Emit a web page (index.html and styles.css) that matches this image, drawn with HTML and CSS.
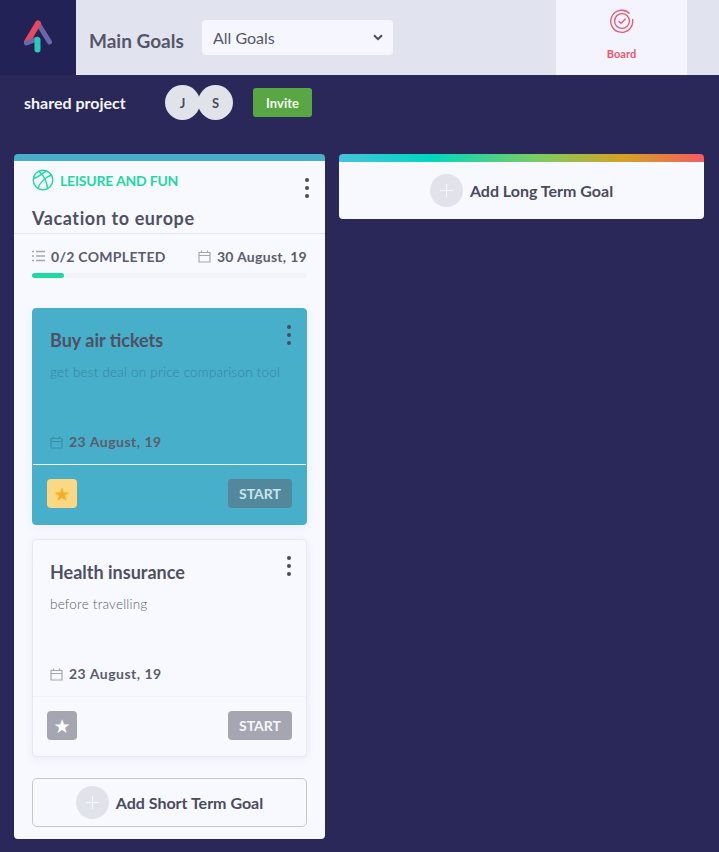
FILE: index.html
```html
<!DOCTYPE html>
<html lang="en">
<head>
  <meta charset="UTF-8">
  <title>Main Goals</title>
  <link rel="stylesheet" href="styles.css">
</head>
<body>
  <div class="topbar">
    <div class="logo">
      <svg width="32" height="36" viewBox="0 0 32 36">
        <path d="M16 5.5 L27.5 24" stroke="#6a68a8" stroke-width="5" stroke-linecap="round" fill="none"/>
        <path d="M5 24 L16 5.5" stroke="#e8475f" stroke-width="6" stroke-linecap="round" fill="none"/>
        <path d="M4.5 25 L15 21" stroke="#6a68a8" stroke-width="5" stroke-linecap="round" fill="none"/>
        <path d="M15.5 22 V31.5" stroke="#2cc9bb" stroke-width="6" stroke-linecap="round" fill="none"/>
      </svg>
    </div>
    <div class="page-title">Main Goals</div>
    <div class="goal-select">
      <span>All Goals</span>
      <svg width="10" height="7" viewBox="0 0 10 7"><path d="M1 1.2 L5 5.2 L9 1.2" stroke="#4a4b5e" stroke-width="2" fill="none"/></svg>
    </div>
    <div class="board-tab">
      <svg width="24" height="24" viewBox="0 0 24 24" fill="none" stroke="#e9566d" stroke-width="1.3">
        <path d="M19.5 4.5 A11 11 0 1 0 22.5 10"/>
        <circle cx="12" cy="12" r="7.4"/>
        <path d="M8.6 12 L11 14.4 L15.6 9.8"/>
      </svg>
      <span>Board</span>
    </div>
  </div>

  <div class="subbar">
    <div class="project-name">shared project</div>
    <div class="members">
      <div class="avatar">J</div>
      <div class="avatar">S</div>
    </div>
    <button class="invite">Invite</button>
  </div>

  <div class="board">
    <div class="column">
      <div class="column-head">
        <div class="category">
          <svg width="22" height="22" viewBox="0 0 22 22" fill="none" stroke="#1ed9a0" stroke-width="1.4">
            <circle cx="11" cy="11" r="9.8"/>
            <path d="M7 2.2 C11 6 15 11 15.6 19.6"/>
            <path d="M14.5 1.9 C9 6 4.5 9 1.3 9.5"/>
            <path d="M19.6 6 C14 8 8 13 6 19.6"/>
          </svg>
          <span>LEISURE AND FUN</span>
        </div>
        <div class="dots"><i></i><i></i><i></i></div>
        <h2>Vacation to europe</h2>
      </div>
      <div class="column-meta">
        <div class="meta-item">
          <svg width="13" height="12" viewBox="0 0 13 12" stroke="#a5a6b4" stroke-width="1.5"><path d="M0 1.5 H2 M4 1.5 H13 M0 6 H2 M4 6 H13 M0 10.5 H2 M4 10.5 H13"/></svg>
          <span>0/2 COMPLETED</span>
        </div>
        <div class="meta-item">
          <svg class="cal" width="13" height="13" viewBox="0 0 13 13" fill="none" stroke="#a5a6b4" stroke-width="1.2"><path d="M1 2.5 H12 V12 H1 Z M1 5.5 H12 M3.5 0.5 V2.5 M9.5 0.5 V2.5"/></svg>
          <span>30 August, 19</span>
        </div>
      </div>
      <div class="progress"><div class="progress-fill" style="width: 32px"></div></div>

      <div class="task task-active">
        <div class="task-body">
          <div class="dots"><i></i><i></i><i></i></div>
          <h3>Buy air tickets</h3>
          <p>get best deal on price comparison tool</p>
          <div class="task-date">
            <svg width="13" height="13" viewBox="0 0 13 13" fill="none" stroke="#3f8ea8" stroke-width="1.2"><path d="M1 2.5 H12 V12 H1 Z M1 5.5 H12 M3.5 0.5 V2.5 M9.5 0.5 V2.5"/></svg>
            <span>23 August, 19</span>
          </div>
        </div>
        <div class="task-foot">
          <div class="star star-on">★</div>
          <button class="start">START</button>
        </div>
      </div>

      <div class="task">
        <div class="task-body">
          <div class="dots"><i></i><i></i><i></i></div>
          <h3>Health insurance</h3>
          <p>before travelling</p>
          <div class="task-date">
            <svg width="13" height="13" viewBox="0 0 13 13" fill="none" stroke="#a5a6b4" stroke-width="1.2"><path d="M1 2.5 H12 V12 H1 Z M1 5.5 H12 M3.5 0.5 V2.5 M9.5 0.5 V2.5"/></svg>
            <span>23 August, 19</span>
          </div>
        </div>
        <div class="task-foot">
          <div class="star">★</div>
          <button class="start">START</button>
        </div>
      </div>

      <div class="add-short">
        <div class="plus"></div>
        <span>Add Short Term Goal</span>
      </div>
    </div>

    <div class="add-long">
      <div class="plus"></div>
      <span>Add Long Term Goal</span>
    </div>
  </div>
</body>
</html>
```

FILE: styles.css
```css
* {
  box-sizing: border-box;
}
html, body {
  height: 100%;
}
body {
  margin: 0;
  background: #2a2858;
  font-family: Lato, "Open Sans", sans-serif;
  color: #4a4b5e;
  overflow: hidden;
}
.topbar {
  display: flex;
  align-items: stretch;
  height: 75px;
  background: #e1e3ee;
}
.logo {
  width: 76px;
  background: #232257;
  display: flex;
  align-items: center;
  justify-content: center;
  padding-bottom: 4px;
}
.page-title {
  margin-left: 13px;
  padding-top: 29px;
  font-size: 19px;
  font-weight: 700;
  line-height: 24px;
  color: #55566a;
  width: 113px;
}
.goal-select {
  align-self: flex-start;
  margin-top: 20px;
  width: 191px;
  height: 35px;
  padding: 0 10px 0 11px;
  display: flex;
  align-items: center;
  justify-content: space-between;
  background: #f5f6fe;
  border-radius: 4px;
  font-size: 16px;
  color: #55566a;
}
.board-tab {
  margin-left: auto;
  margin-right: 32px;
  width: 131px;
  background: #f3f4fd;
  display: flex;
  flex-direction: column;
  align-items: center;
  padding-top: 9px;
  font-size: 11px;
  font-weight: 700;
  color: #e9566d;
}
.board-tab span {
  margin-top: 14px;
}
.subbar {
  display: flex;
  align-items: center;
  height: 55px;
  padding-left: 24px;
}
.project-name {
  width: 141px;
  font-size: 16px;
  font-weight: 700;
  color: #f3f4fd;
}
.members {
  display: flex;
  width: 88px;
}
.avatar {
  width: 35px;
  height: 35px;
  border-radius: 50%;
  background: #e1e3ea;
  display: flex;
  align-items: center;
  justify-content: center;
  font-size: 13px;
  font-weight: 700;
  color: #4a4b5e;
}
.avatar + .avatar {
  margin-left: -2px;
}
.invite {
  width: 59px;
  height: 29px;
  border: none;
  border-radius: 3px;
  background: #59a744;
  color: #f3f7ee;
  font-family: inherit;
  font-size: 13px;
  font-weight: 700;
  padding: 0;
}
.board {
  display: flex;
  align-items: flex-start;
  gap: 14px;
  padding: 24px 15px 0 14px;
}
.column {
  width: 311px;
  height: 685px;
  flex-shrink: 0;
  background: #f8f9ff;
  border-top: 7px solid #47afc9;
  border-radius: 4px;
}
.column-head {
  position: relative;
  height: 73px;
  padding: 8px 17px 0 18px;
  border-bottom: 1px solid #e4e5ee;
}
.category {
  display: flex;
  align-items: center;
  gap: 6px;
  height: 22px;
  font-size: 14px;
  font-weight: 700;
  letter-spacing: -0.2px;
  color: #1ed9a0;
}
.column-head h2 {
  margin: 16px 0 0;
  font-size: 18px;
  line-height: 22px;
  font-weight: 700;
  letter-spacing: 0.6px;
  color: #4f5063;
}
.dots {
  position: absolute;
  top: 17px;
  right: 16px;
  display: flex;
  flex-direction: column;
  gap: 4px;
}
.dots i {
  display: block;
  width: 4px;
  height: 4px;
  border-radius: 50%;
  background: #4a4b5e;
}
.column-meta {
  display: flex;
  justify-content: space-between;
  align-items: center;
  height: 16px;
  margin: 14px 18px 0 18px;
  font-size: 14px;
  font-weight: 700;
  letter-spacing: 0.3px;
  color: #5b5c6e;
}
.meta-item {
  display: flex;
  align-items: center;
  gap: 6px;
}
.progress {
  height: 5px;
  margin: 9px 18px 0;
  background: #f2f3f7;
  border-radius: 3px;
}
.progress-fill {
  height: 100%;
  background: #1ed9a0;
  border-radius: 3px;
}
.task {
  position: relative;
  height: 218px;
  margin: 30px 18px 0;
  background: #f8f9ff;
  border: 1px solid #e6e7f0;
  border-radius: 4px;
  box-shadow: 0 2px 8px rgba(80, 80, 120, 0.08);
}
.task + .task {
  margin-top: 14px;
}
.task-active {
  background: #47afc9;
  border-color: #47afc9;
  height: 217px;
}
.task-body {
  position: relative;
  height: 156px;
  padding: 21px 17px 14px;
  display: flex;
  flex-direction: column;
}
.task-active .task-body {
  height: 155px;
  padding-top: 20px;
}
.task-body .dots {
  top: 16px;
  right: 15px;
}
.task-body h3 {
  margin: 0;
  font-size: 18px;
  line-height: 22px;
  font-weight: 700;
  color: #4f5063;
}
.task-body p {
  margin: 13px 0 0;
  font-size: 13.5px;
  line-height: 16px;
  font-weight: 300;
  letter-spacing: 0.2px;
  color: #5b5c6e;
}
.task-active .task-body p {
  color: #3a82a0;
}
.task-date {
  margin-top: auto;
  display: flex;
  align-items: center;
  gap: 6px;
  font-size: 14px;
  line-height: 16px;
  font-weight: 700;
  letter-spacing: 0.5px;
  color: #5b5c6e;
}
.task-foot {
  display: flex;
  justify-content: space-between;
  align-items: flex-start;
  padding: 14px 14px 0;
  border-top: 1px solid #f1f2f8;
}
.task-active .task-foot {
  border-top-color: #f3f4fd;
}
.star {
  width: 30px;
  height: 29px;
  border-radius: 4px;
  background: #a5a6b2;
  color: #fff;
  display: flex;
  align-items: center;
  justify-content: center;
  font-family: "DejaVu Sans", sans-serif;
  font-size: 19px;
}
.star-on {
  background: #fcd883;
  color: #f5ad22;
}
.start {
  width: 64px;
  height: 29px;
  border: none;
  border-radius: 4px;
  background: #a5a6b2;
  color: #f5f6fc;
  font-family: inherit;
  font-size: 14px;
  font-weight: 700;
  padding: 0;
}
.task-active .start {
  background: #53879c;
  color: #c6e6ef;
}
.add-short {
  height: 49px;
  margin: 21px 18px 0;
  display: flex;
  align-items: center;
  justify-content: center;
  gap: 7px;
  border: 1px solid #c6c7d2;
  border-radius: 5px;
  font-size: 16px;
  font-weight: 700;
  color: #4a4b5e;
}
.plus {
  position: relative;
  width: 33px;
  height: 33px;
  border-radius: 50%;
  background: #e1e3ea;
}
.plus::before,
.plus::after {
  content: "";
  position: absolute;
  background: #f8f9ff;
}
.plus::before {
  left: 10px;
  top: 16px;
  width: 13px;
  height: 1px;
}
.plus::after {
  left: 16px;
  top: 10px;
  width: 1px;
  height: 13px;
}
.add-long {
  width: 365px;
  height: 65px;
  padding-top: 8px;
  display: flex;
  align-items: center;
  justify-content: center;
  gap: 7px;
  background: #f8f9ff;
  background-image: linear-gradient(90deg, #47c3dc 0%, #00d8c0 25%, #7fcb60 55%, #d3a324 78%, #f85a62 100%);
  background-size: 100% 8px;
  background-repeat: no-repeat;
  border-radius: 4px;
  font-size: 16px;
  font-weight: 700;
  color: #4a4b5e;
}
```
